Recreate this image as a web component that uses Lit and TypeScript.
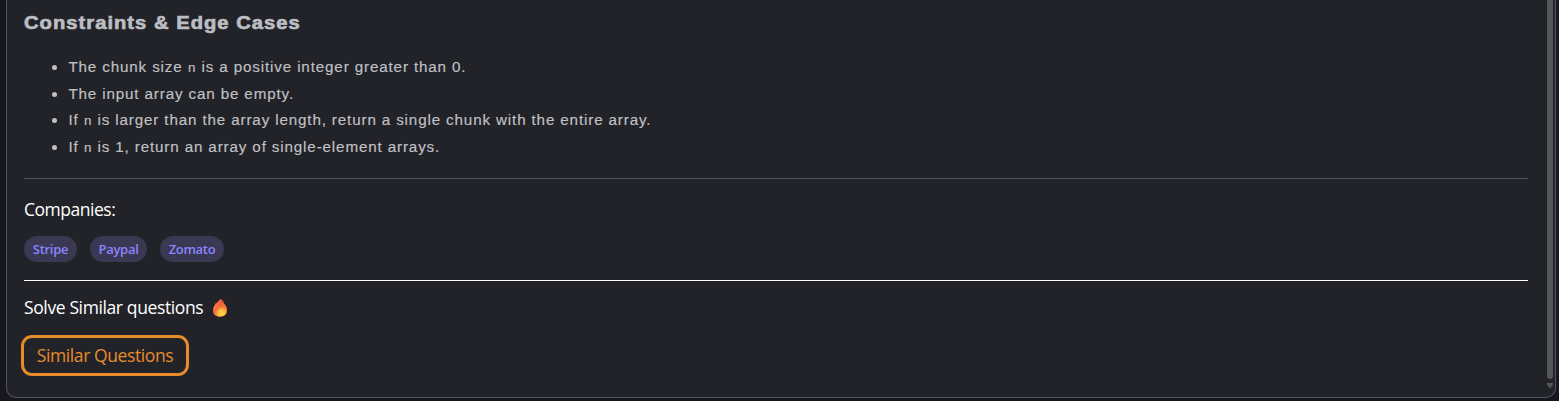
import { LitElement, html, css } from "lit";
import { customElement } from "lit/decorators.js";

@customElement("app-root")
export class AppRoot extends LitElement {
  static styles = css`
    :host { display: block; height: 401px; background: #17181d; overflow: hidden; padding: 0 3px 0 6px; box-sizing: border-box; }
    .panel { display: flex; box-sizing: border-box; height: 398px; border: 1px solid #54545c; border-top: 0; border-radius: 0 0 10px 10px; background: #222328; padding-left: 17px; }
    .content { width: 1504px; height: 397px; flex: none; color: #fff; font-family: "Open Sans", "Noto Sans", sans-serif; font-size: 17.5px; }
    h3 { margin: 0; padding-top: 10px; height: 43.5px; box-sizing: content-box; font: 700 18px/27px "Liberation Sans", sans-serif; letter-spacing: 0.92px; color: #bcbec3; -webkit-text-stroke: 0.65px #bcbec3; white-space: nowrap; transform: scaleX(1.12); transform-origin: 0 0; }
    ul { box-sizing: border-box; margin: 0; padding: 0.4px 0 0 44.4px; font: 15.2px/26.67px "Liberation Sans", sans-serif; letter-spacing: 0.86px; color: #c0c1c6; -webkit-text-stroke: 0.15px #c0c1c6; height: 124.5px; }
    li { height: 26.67px; }
    code { font: 13.3px/1 "Liberation Mono", monospace; letter-spacing: 0.8px; }
    .rule { height: 1px; background: #54555a; }
    .rule.light { background: #fff; }
    .label { height: 57px; line-height: 60.5px; white-space: nowrap; letter-spacing: -0.48px; }
    .tags { display: flex; gap: 13px; height: 44px; }
    .tag { box-sizing: border-box; height: 26px; border-radius: 13px; background: #3a3852; color: #8c85ff; font: 600 13px/26px "Open Sans", "Noto Sans", sans-serif; text-align: center; white-space: nowrap; letter-spacing: -0.3px; }
    .stripe { width: 53px; } .paypal { width: 57px; } .zomato { width: 64px; }
    .similar { display: flex; height: 54px; line-height: 53px; letter-spacing: -0.38px; white-space: nowrap; }
    .fire { width: 16px; height: 18px; margin: 18px 0 0 8.8px; }
    button { display: block; box-sizing: border-box; width: 168px; height: 41px; margin: 0 0 0 -3px; padding: 0; border: 3px solid #e78b2c; border-radius: 11px; background: transparent; color: #e78b2c; font: 17.5px/35px "Open Sans", "Noto Sans", sans-serif; letter-spacing: -0.41px; white-space: nowrap; }
    .scroll { width: 6px; margin-left: 19px; flex: none; }
    .thumb { height: 379px; border-radius: 0 0 3px 3px; background: #55565a; }
    .arrow { display: block; margin-top: 4px; }
  `;

  render() {
    return html`
      <div class="panel">
        <div class="content">
          <h3>Constraints &amp; Edge Cases</h3>
          <ul>
            <li>The chunk size <code>n</code> is a positive integer greater than 0.</li>
            <li>The input array can be empty.</li>
            <li>If <code>n</code> is larger than the array length, return a single chunk with the entire array.</li>
            <li>If <code>n</code> is 1, return an array of single-element arrays.</li>
          </ul>
          <div class="rule"></div>
          <div class="label">Companies:</div>
          <div class="tags">
            <span class="tag stripe">Stripe</span><span class="tag paypal">Paypal</span><span class="tag zomato">Zomato</span>
          </div>
          <div class="rule light"></div>
          <div class="similar"><span>Solve Similar questions</span>
            <svg class="fire" viewBox="0 0 16 18">
              <defs>
                <linearGradient id="flame" x1="0.2" y1="0" x2="0.65" y2="1">
                  <stop offset="0" stop-color="#e9483d"></stop><stop offset="0.5" stop-color="#f36d3a"></stop><stop offset="1" stop-color="#fb9a3c"></stop>
                </linearGradient>
                <radialGradient id="core" cx="0.6" cy="0.8" r="0.65">
                  <stop offset="0" stop-color="#ffd84a"></stop><stop offset="0.55" stop-color="#ffb83f"></stop><stop offset="1" stop-color="#f9803a" stop-opacity="0"></stop>
                </radialGradient>
              </defs>
              <path fill="url(#flame)" d="M8.6 0c2.200 1 3 2.800 3.400 4.600 2 2 3 4.400 3 7 0 3.800-2.500 6.200-6.800 6.200-4.500 0-7.200-2.500-7.200-6.300C1 9 2 7 3 5.800c.4-1.400.8-2.200 1.800-2.600.4.200.6.300.7.6C6.200 2.200 7.300.8 8.600 0z"></path>
              <path fill="url(#core)" d="M10 5c1.300 1.600 2 3.300 2.300 4.700l1.500-1.700c1 5.200-.3 9.300-5.200 9.300-4 0-5.800-2.600-5.100-5.600C4.500 9 8 9 10 5z"></path>
              <path d="M8.200 1.500C6 3.500 6.200 5.200 4.800 7.500M4 5.700c-1 1.600-1.400 3-1.400 4.500" fill="none" stroke="#ff9871" stroke-width=".7"></path>
            </svg>
          </div>
          <button>Similar Questions</button>
        </div>
        <div class="scroll">
          <div class="thumb"></div>
          <svg class="arrow" width="6" height="5" viewBox="0 0 6 5"><path d="M0 0h6v1.500L3.500 5h-1L0 1.500z" fill="#55565a"></path></svg>
        </div>
      </div>
    `;
  }
}
